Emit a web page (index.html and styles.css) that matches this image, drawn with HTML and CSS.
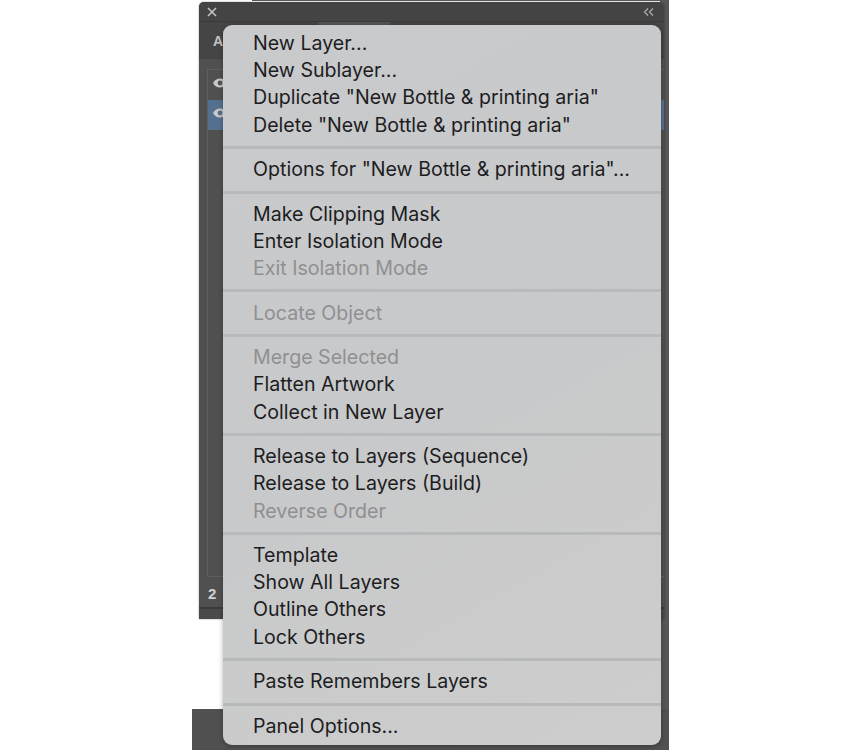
FILE: index.html
```html
<!DOCTYPE html>
<html lang="en">
<head>
<meta charset="utf-8">
<title>Layers panel menu</title>
<link rel="stylesheet" href="styles.css">
</head>
<body>
<div class="stage">
  <div class="backdrop-top"></div>
  <div class="backdrop-side"></div>
  <section class="panel">
    <header class="titlebar">
      <svg class="close" viewBox="0 0 10 10" width="10" height="10"><path d="M1 1l8 8M9 1l-8 8" stroke="#c4c4c4" stroke-width="1.6" fill="none"/></svg>
      <svg class="collapse" viewBox="0 0 11 8" width="11" height="8"><path d="M5 .5L1.5 4 5 7.5M10 .5L6.5 4 10 7.5" stroke="#b0b0b0" stroke-width="1.2" fill="none"/></svg>
    </header>
    <div class="tabs"><span class="tab-label">A</span><span class="tab-active"></span></div>
    <div class="list">
      <div class="layer"><svg class="eye" viewBox="0 0 14 10" width="14" height="10"><path d="M0 5c3-6 11-6 14 0c-3 6-11 6-14 0z" fill="#c8c8c8"/><circle cx="7" cy="5" r="2.4" fill="#555"/></svg></div>
      <div class="layer selected"><svg class="eye" viewBox="0 0 14 10" width="14" height="10"><path d="M0 5c3-6 11-6 14 0c-3 6-11 6-14 0z" fill="#c8c8c8"/><circle cx="7" cy="5" r="2.4" fill="#54708f"/></svg></div>
    </div>
    <footer class="panel-foot"><span class="count">2</span></footer>
  </section>
  <div class="bottom-strip"></div>
  <nav class="menu">
    <div class="item">New Layer...</div>
    <div class="item">New Sublayer...</div>
    <div class="item">Duplicate "New Bottle &amp; printing aria"</div>
    <div class="item">Delete "New Bottle &amp; printing aria"</div>
    <div class="sep"></div>
    <div class="item">Options for "New Bottle &amp; printing aria"...</div>
    <div class="sep"></div>
    <div class="item">Make Clipping Mask</div>
    <div class="item">Enter Isolation Mode</div>
    <div class="item off">Exit Isolation Mode</div>
    <div class="sep"></div>
    <div class="item off">Locate Object</div>
    <div class="sep"></div>
    <div class="item off">Merge Selected</div>
    <div class="item">Flatten Artwork</div>
    <div class="item">Collect in New Layer</div>
    <div class="sep"></div>
    <div class="item">Release to Layers (Sequence)</div>
    <div class="item">Release to Layers (Build)</div>
    <div class="item off">Reverse Order</div>
    <div class="sep"></div>
    <div class="item">Template</div>
    <div class="item">Show All Layers</div>
    <div class="item">Outline Others</div>
    <div class="item">Lock Others</div>
    <div class="sep"></div>
    <div class="item">Paste Remembers Layers</div>
    <div class="sep"></div>
    <div class="item">Panel Options...</div>
  </nav>
</div>
</body>
</html>
```
FILE: styles.css
```css
* { box-sizing: border-box; }
html, body { margin: 0; height: 100%; background: #fff; overflow: hidden; }
.stage { position: relative; width: 861px; height: 750px; font-family: Inter, "Liberation Sans", sans-serif; }
.backdrop-top { position: absolute; left: 252px; top: 0; width: 417px; height: 1px; background: #5a5a5a; }
.backdrop-side { position: absolute; left: 660px; top: 0; width: 9px; height: 750px; background: #565656; }
.panel { position: absolute; left: 199px; top: 2px; width: 465px; height: 617px; background: #505050; border-radius: 5px 5px 0 0; box-shadow: 0 0 2px rgba(0,0,0,.4); display: flex; flex-direction: column; }
.titlebar { height: 19px; background: #444; border-radius: 5px 5px 0 0; display: flex; align-items: center; justify-content: space-between; padding: 0 10px 0 8px; flex: none; }
.tabs { height: 38px; background: #454545; border-top: 1px solid #3a3a3a; flex: none; display: flex; align-items: center; padding-left: 14px; position: relative; }
.tab-label { color: #c4c4c4; font-weight: 700; font-size: 14px; font-family: "Liberation Sans", sans-serif; }
.tab-active { position: absolute; left: 119px; top: 0; width: 72px; height: 38px; background: #535353; }
.list { flex: 1; margin: 10px 0 30px 8px; border-left: 1px solid #5e5e5e; border-top: 1px solid #5e5e5e; border-bottom: 1px solid #5e5e5e; }
.layer { height: 30px; display: flex; align-items: center; padding: 0 0 4px 5px; }
.selected { background: #54708f; }
.panel-foot { height: 12px; flex: none; border-top: 2px solid #3a3a3a; background: #4a4a4a; position: relative; }
.count { position: absolute; left: 9px; top: -24px; color: #d0d0d0; font-weight: 700; font-size: 15px; font-family: "Liberation Sans", sans-serif; }
.bottom-strip { position: absolute; left: 192px; top: 709px; width: 477px; height: 41px; background: #505050; }
.menu { position: absolute; left: 223px; top: 25px; width: 438px; height: 720px; padding: 5px 0 0 30px; border-radius: 9px; background: linear-gradient(150deg, #c9cacc 0%, #c8c9ca 50%, #cdcdcd 100%); box-shadow: 0 1px 5px rgba(0,0,0,.3); }
.item { height: 27.2px; line-height: 27.2px; font-size: 19.6px; color: #1d1d1f; white-space: nowrap; }
.off { color: #8f9092; }
.sep { height: 3px; margin: 7.2px 0 7.2px -30px; background: #b8b9ba; }
```
